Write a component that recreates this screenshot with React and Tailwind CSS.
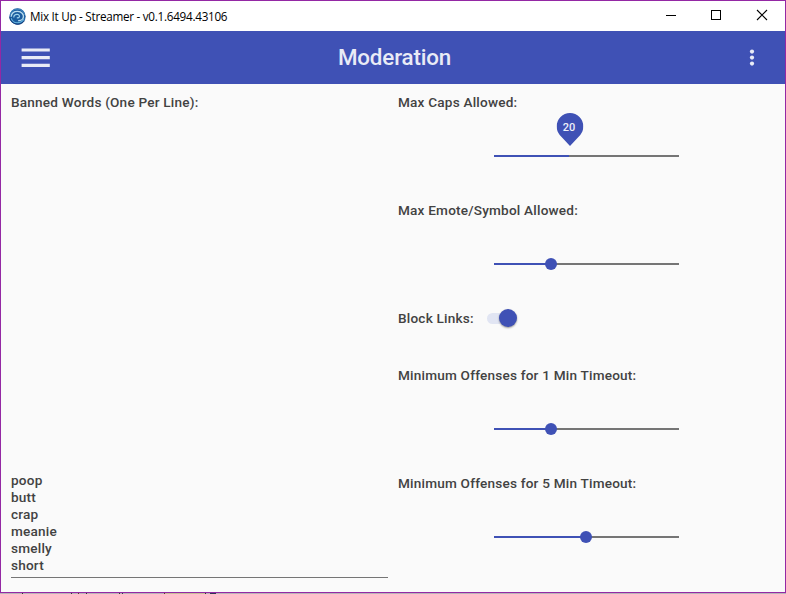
import React from "react";

function Logo() {
  return (
    <svg className="h-[17px] w-[17px] shrink-0" viewBox="0 0 16 16" fill="none">
      <circle cx="8" cy="8" r="7.7" fill="#1b5c9e" />
      <path d="M1.200 6.500C2 3 5 .9 8.500 1.200c3.200.3 5.600 2.600 6.100 5.300" stroke="#3f86bd" strokeWidth="1" />
      <path d="M2 8.200C2.400 5 5 3.100 8.200 3.200c3.600.1 5.700 2.600 5.400 5.100-.3 2.300-2.500 3.800-5 3.600" stroke="#b9dcef" strokeWidth="1.300" />
      <path d="M4.500 9C4.300 6.900 6.200 5.700 8 6c1.600.3 2.300 1.700 1.600 2.600-.5.7-1.500.8-2.200.3" stroke="#9fd3ec" strokeWidth="1.100" />
      <path d="M2 9.500c.8 3 3.600 4.600 6.700 4.300 2.600-.3 4.600-1.800 5.500-3.800" stroke="#62b1dc" strokeWidth="1.100" />
      <path d="M.7 8.500c.3 3.700 3.500 6.600 7.300 6.800 2.700.1 5-1.100 6.400-3.200" stroke="#143a78" strokeWidth=".9" />
    </svg>
  );
}

function TitleBar() {
  return (
    <div className="flex h-[30px] shrink-0 items-center bg-white pl-[8px] text-black">
      <Logo />
      <span className="mb-px ml-[4px] font-['Open_Sans','Noto_Sans',sans-serif] text-[11.700px] leading-4 tracking-[-0.27px] whitespace-nowrap">
        Mix It Up - Streamer - v0.1.6494.43106
      </span>
      <div className="-mr-[2px] ml-auto flex">
        <svg className="h-[30px] w-[46px]" viewBox="0 0 46 30" shapeRendering="crispEdges">
          <path d="M17 14h10v1H17z" fill="#000" />
        </svg>
        <svg className="h-[30px] w-[46px]" viewBox="0 0 46 30" shapeRendering="crispEdges">
          <path d="M16.500 9.500h9v9h-9z" stroke="#000" fill="none" />
        </svg>
        <svg className="h-[30px] w-[46px]" viewBox="0 0 46 30">
          <path d="M16 9l10 10M26 9l-10 10" stroke="#000" fill="none" strokeWidth="1.100" />
        </svg>
      </div>
    </div>
  );
}

function Header() {
  return (
    <div className="grid h-[53px] shrink-0 grid-cols-[1fr_auto_1fr] items-center bg-[#3f51b5] text-[#e9ebf6]">
      <svg className="ml-5 h-5 w-[30px]" viewBox="0 0 30 20" fill="currentColor">
        <path d="M.6.5h28.200v3.100H.6zM.6 8.100h28.200v3.100H.6zM.6 15.800h28.200v3.100H.6z" />
      </svg>
      <h1 className="mr-[-3px] mb-[2px] text-[22.400px] leading-7 font-medium tracking-[-0.16px]">Moderation</h1>
      <svg className="mr-[30px] h-5 w-[6px] justify-self-end" viewBox="0 0 6 20" fill="currentColor">
        <circle cx="3" cy="3.600" r="2.100" />
        <circle cx="3" cy="9.600" r="2.100" />
        <circle cx="3" cy="15.600" r="2.100" />
      </svg>
    </div>
  );
}

function Slider({ label, value, tip }) {
  return (
    <div className="flex h-[108px] flex-col">
      <span>{label}</span>
      <div className="relative mt-[44px] ml-24 h-[2px] w-[185px] bg-[#757575]">
        <div className="h-full bg-[#3f51b5]" style={{ width: value }} />
        {tip ? (
          <div
            className="absolute bottom-[11px] flex h-[33px] w-[27px] -translate-x-1/2 justify-center"
            style={{ left: value + 0.5 }}
          >
            <svg className="absolute inset-0" width="27" height="33" viewBox="0 0 27 33">
              <path d="M13.500 0A13.300 13.300 0 0 0 .2 13.500c0 3.500 1.200 6 3 8.500L13.500 33l10.300-11c1.800-2.500 3-5 3-8.500A13.300 13.300 0 0 0 13.500 0z" fill="#3f51b5" />
            </svg>
            <span className="relative mt-[6px] -ml-px text-[11px] leading-[17px] font-medium tracking-normal text-[#eef0f9]">{tip}</span>
          </div>
        ) : (
          <div
            className="absolute top-[-5px] h-3 w-3 -translate-x-1/2 rounded-full bg-[#3f51b5]"
            style={{ left: value }}
          />
        )}
      </div>
    </div>
  );
}

function Toggle() {
  return (
    <div className="ml-[13px] flex h-4 w-[31px] items-center">
      <div className="h-[11px] w-[22px] rounded-full bg-[#e1e5f3]" />
      <div className="-ml-[10px] h-[18px] w-[18px] shrink-0 rounded-full bg-[#3f51b5] shadow-[0_1px_2px_rgba(0,0,0,0.4)]" />
    </div>
  );
}

const words = ["poop", "butt", "crap", "meanie", "smelly", "short"];

export default function App() {
  return (
    <div className="flex h-[594px] w-[786px] flex-col overflow-hidden bg-[#b9b2b9] font-['Roboto',sans-serif]">
      <div className="flex h-[593px] shrink-0 flex-col border border-[#9428a4] bg-[#fafafa]">
        <TitleBar />
        <Header />
        <div className="flex min-h-0 grow pt-[10px] pl-[10px] text-[13.600px] leading-[17px] font-medium tracking-[0.2px] text-[#424242]">
          <div className="flex h-[484px] w-[377px] shrink-0 flex-col border-b border-[#757575]">
            <span>Banned Words (One Per Line):</span>
            <div className="mt-auto mb-[3px] flex flex-col">
              {words.map((w) => (
                <span key={w}>{w}</span>
              ))}
            </div>
          </div>
          <div className="ml-[10px] flex grow flex-col">
            <Slider label="Max Caps Allowed:" value={75} tip="20" />
            <Slider label="Max Emote/Symbol Allowed:" value={57} />
            <div className="flex h-[57px] items-start">
              <span>Block Links:</span>
              <Toggle />
            </div>
            <Slider label="Minimum Offenses for 1 Min Timeout:" value={57} />
            <Slider label="Minimum Offenses for 5 Min Timeout:" value={92} />
          </div>
        </div>
      </div>
      <div className="flex h-px shrink-0 items-stretch pl-[22px]">
        <i className="w-px bg-[#333]" />
        <i className="ml-[48px] w-px bg-[#333]" />
        <i className="ml-[6px] w-px bg-[#633]" />
        <i className="ml-[7px] w-px bg-[#333]" />
        <i className="ml-[32px] w-px bg-[#333]" />
        <i className="ml-[2px] w-px bg-[#335]" />
        <i className="ml-[41px] w-px bg-[#633]" />
        <i className="w-[40px] bg-[#c5bd98]" />
        <i className="w-px bg-[#333]" />
        <i className="ml-[4px] w-[6px] bg-[#335]" />
      </div>
    </div>
  );
}
